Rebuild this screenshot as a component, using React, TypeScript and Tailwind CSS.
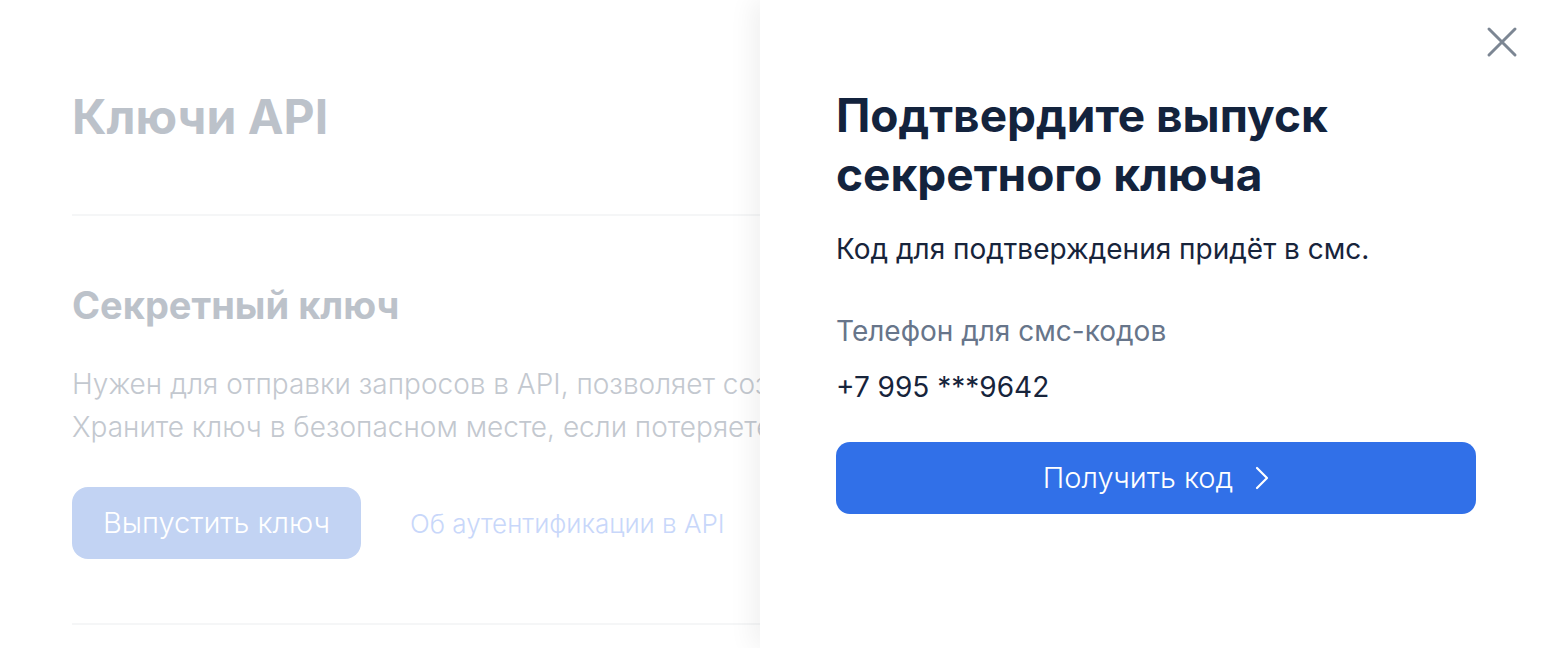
import React from "react";

const font = { fontFamily: "Inter, 'Noto Sans', sans-serif" };

const App: React.FC = () => {
  return (
    <div
      className="flex h-[648px] w-full overflow-hidden bg-white"
      style={font}
    >
      {/* Background page (dimmed) */}
      <div className="flex-1 overflow-hidden pl-[72px] pt-[88px]">
        <h1 className="whitespace-nowrap text-[48px] font-bold leading-[58px] text-[#bcc2ca]">
          Ключи API
        </h1>
        <div className="mt-[68px] h-[2px] w-[900px] bg-[#f5f6f7]" />
        <h2 className="mt-[66px] whitespace-nowrap text-[38px] font-bold leading-[46px] text-[#bcc2ca]">
          Секретный ключ
        </h2>
        <p className="mt-[35px] whitespace-nowrap text-[28px] font-light leading-[43px] text-[#c3c8cf]">
          Нужен для отправки запросов в API, позволяет создавать и менять данные.
          <br />
          Храните ключ в безопасном месте, если потеряете — выпустите новый.
        </p>
        <div className="mt-[38px] flex items-center gap-[49px]">
          <button
            type="button"
            className="h-[72px] w-[289px] rounded-[16px] bg-[#c2d3f3] text-[29px] font-light text-white"
          >
            Выпустить ключ
          </button>
          <span className="whitespace-nowrap text-[26px] font-light text-[#c8d7fa]">
            Об аутентификации в API
          </span>
        </div>
        <div className="mt-[64px] h-[2px] w-[900px] bg-[#f5f6f7]" />
      </div>

      {/* Side panel */}
      <div className="relative z-10 w-[788px] shrink-0 bg-white pl-[76px] pr-[72px] pt-[86px] shadow-[-8px_0_24px_rgba(0,0,0,0.06)]">
        <button
          type="button"
          aria-label="Закрыть"
          className="absolute right-[30px] top-[26px] flex h-[32px] w-[32px] items-center justify-center"
        >
          <svg width="32" height="32" viewBox="0 0 32 32" fill="none">
            <path
              d="M3 3L29 29M29 3L3 29"
              stroke="#7c8693"
              strokeWidth="3"
              strokeLinecap="round"
            />
          </svg>
        </button>
        <h2 className="text-[46px] font-bold leading-[59px] text-[#13233d]">
          Подтвердите выпуск
          <br />
          секретного ключа
        </h2>
        <p className="mt-[27px] text-[28px] leading-[36px] text-[#17243b]">
          Код для подтверждения придёт в смс.
        </p>
        <p className="mt-[46px] text-[28px] leading-[36px] text-[#67758a]">
          Телефон для смс-кодов
        </p>
        <p className="mt-[20px] text-[28px] leading-[36px] text-[#17243b]">
          +7 995 ***9642
        </p>
        <button
          type="button"
          className="mt-[37px] flex h-[72px] w-[640px] items-center justify-center gap-[22px] rounded-[14px] bg-[#3170e8] text-[29px] font-light text-white"
        >
          Получить код
          <svg width="14" height="24" viewBox="0 0 14 24" fill="none">
            <path
              d="M2 2L12 12L2 22"
              stroke="white"
              strokeWidth="2.2"
              strokeLinecap="round"
              strokeLinejoin="round"
            />
          </svg>
        </button>
      </div>
    </div>
  );
};

export default App;
